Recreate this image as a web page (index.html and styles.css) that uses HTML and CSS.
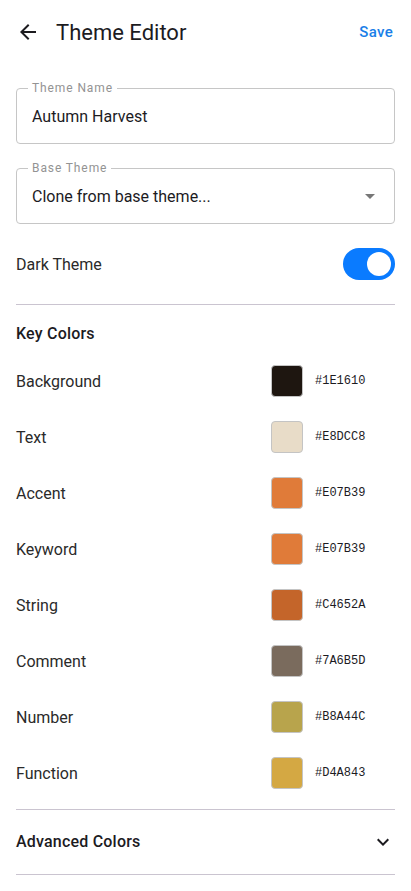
FILE: index.html
```html
<!DOCTYPE html>
<html>
<head>
<meta charset="utf-8">
<link rel="stylesheet" href="styles.css">
</head>
<body>
<header class="topbar">
  <svg class="icon" viewBox="0 0 24 24" width="24" height="24"><path d="M20 11H7.83l5.59-5.59L12 4l-8 8 8 8 1.41-1.41L7.83 13H20v-2z" fill="#1c1b1f"/></svg>
  <h1 class="title">Theme Editor</h1>
  <span class="save">Save</span>
</header>
<main class="content">
  <div class="field">
    <span class="field-label">Theme Name</span>
    <span class="field-value">Autumn Harvest</span>
  </div>
  <div class="field">
    <span class="field-label">Base Theme</span>
    <span class="field-value">Clone from base theme...</span>
    <span class="caret"></span>
  </div>
  <div class="toggle-row">
    <span class="row-label">Dark Theme</span>
    <span class="switch"><span class="thumb"></span></span>
  </div>
  <hr class="divider">
  <h2 class="section">Key Colors</h2>
  <div class="colors">
    <div class="color-row"><span class="row-label">Background</span><span class="swatch" style="background:#1E1610"></span><span class="hex">#1E1610</span></div>
    <div class="color-row"><span class="row-label">Text</span><span class="swatch" style="background:#E8DCC8"></span><span class="hex">#E8DCC8</span></div>
    <div class="color-row"><span class="row-label">Accent</span><span class="swatch" style="background:#E07B39"></span><span class="hex">#E07B39</span></div>
    <div class="color-row"><span class="row-label">Keyword</span><span class="swatch" style="background:#E07B39"></span><span class="hex">#E07B39</span></div>
    <div class="color-row"><span class="row-label">String</span><span class="swatch" style="background:#C4652A"></span><span class="hex">#C4652A</span></div>
    <div class="color-row"><span class="row-label">Comment</span><span class="swatch" style="background:#7A6B5D"></span><span class="hex">#7A6B5D</span></div>
    <div class="color-row"><span class="row-label">Number</span><span class="swatch" style="background:#B8A44C"></span><span class="hex">#B8A44C</span></div>
    <div class="color-row"><span class="row-label">Function</span><span class="swatch" style="background:#D4A843"></span><span class="hex">#D4A843</span></div>
  </div>
  <hr class="divider">
  <div class="advanced">
    <span class="section">Advanced Colors</span>
    <svg class="icon" viewBox="0 0 24 24" width="24" height="24"><path d="M16.59 8.59L12 13.17 7.41 8.59 6 10l6 6 6-6z" fill="#1c1b1f"/></svg>
  </div>
  <hr class="divider">
</main>
</body>
</html>
```
FILE: styles.css
```css
* { box-sizing: border-box; }
html, body { margin: 0; padding: 0; background: #fff; }
body {
  font-family: Roboto, "Noto Sans", sans-serif;
  color: #1c1b1f;
  width: 411px;
}
.topbar {
  height: 64px;
  display: flex;
  align-items: center;
  padding: 0 18px 0 16px;
}
.icon { display: block; flex: none; }
.title {
  margin: 0 0 0 16px;
  font-size: 22px;
  font-weight: 400;
  flex: 1;
  color: #1c1b1f;
}
.save {
  font-size: 15px;
  font-weight: 500;
  color: #1a7fe8;
  letter-spacing: 0.3px;
}
.content {
  padding: 24px 16px 0;
  display: flex;
  flex-direction: column;
}
.field {
  position: relative;
  height: 56px;
  border: 1px solid #c6c6c6;
  border-radius: 4px;
  display: flex;
  align-items: center;
  padding: 0 15px;
  margin-bottom: 24px;
}
.field-label {
  position: absolute;
  top: -8px;
  left: 11px;
  padding: 0 4px;
  background: #fff;
  font-size: 12px;
  line-height: 14px;
  letter-spacing: 0.9px;
  color: #939393;
}
.field-value {
  font-size: 16px;
  flex: 1;
  color: #1c1b1f;
}
.caret {
  width: 0;
  height: 0;
  border-left: 5px solid transparent;
  border-right: 5px solid transparent;
  border-top: 5px solid #777;
  margin-right: 4px;
}
.toggle-row {
  height: 32px;
  display: flex;
  align-items: center;
  justify-content: space-between;
  margin-bottom: 24px;
}
.row-label {
  font-size: 16px;
  color: #2a2a2a;
  flex: 1;
}
.switch {
  width: 52px;
  height: 32px;
  border-radius: 16px;
  background: #0a7bff;
  display: flex;
  align-items: center;
  justify-content: flex-end;
  padding: 0 4px;
}
.thumb {
  width: 24px;
  height: 24px;
  border-radius: 50%;
  background: #fff;
}
.divider {
  margin: 0;
  border: none;
  border-top: 1px solid #cac4d0;
  height: 0;
}
.section {
  margin: 17px 0 7px;
  font-size: 16px;
  font-weight: 500;
  line-height: 24px;
  letter-spacing: 0.2px;
  color: #1c1b1f;
}
.colors {
  display: flex;
  flex-direction: column;
  margin-bottom: 8px;
}
.color-row {
  height: 56px;
  display: flex;
  align-items: center;
}
.swatch {
  width: 32px;
  height: 32px;
  border-radius: 4px;
  border: 1px solid #c4c4c4;
  margin-right: 12px;
}
.hex {
  width: 80px;
  font-family: "Liberation Mono", "DejaVu Sans Mono", monospace;
  font-size: 12px;
  color: #1c1b1f;
}
.advanced {
  height: 64px;
  display: flex;
  align-items: center;
  justify-content: space-between;
}
.advanced .section { margin: 0; }
```
